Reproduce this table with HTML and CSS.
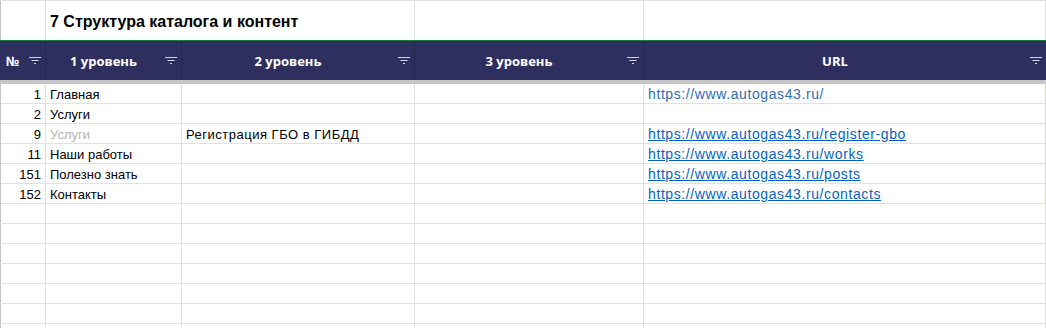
FILE: index.html
```html
<!DOCTYPE html>
<html lang="ru">
<head>
<meta charset="utf-8">
<title>Структура каталога</title>
<link rel="stylesheet" href="styles.css">
</head>
<body>
<div class="sheet">
  <div class="row title-row">
    <div class="cell c0"></div>
    <div class="cell title">7 Структура каталога и контент</div>
    <div class="cell"></div>
    <div class="cell"></div>
  </div>
  <div class="row head-row">
    <div class="hcell"><span class="hlabel">№</span><svg class="filter" width="12" height="7" viewBox="0 0 12 7"><rect x="0" y="0" width="12" height="1"/><rect x="2.5" y="3" width="7" height="1"/><rect x="5" y="6" width="2" height="1"/></svg></div>
    <div class="hcell"><span class="hlabel">1 уровень</span><svg class="filter" width="12" height="7" viewBox="0 0 12 7"><rect x="0" y="0" width="12" height="1"/><rect x="2.5" y="3" width="7" height="1"/><rect x="5" y="6" width="2" height="1"/></svg></div>
    <div class="hcell"><span class="hlabel">2 уровень</span><svg class="filter" width="12" height="7" viewBox="0 0 12 7"><rect x="0" y="0" width="12" height="1"/><rect x="2.5" y="3" width="7" height="1"/><rect x="5" y="6" width="2" height="1"/></svg></div>
    <div class="hcell"><span class="hlabel">3 уровень</span><svg class="filter" width="12" height="7" viewBox="0 0 12 7"><rect x="0" y="0" width="12" height="1"/><rect x="2.5" y="3" width="7" height="1"/><rect x="5" y="6" width="2" height="1"/></svg></div>
    <div class="hcell last"><span class="hlabel">URL</span><svg class="filter" width="12" height="7" viewBox="0 0 12 7"><rect x="0" y="0" width="12" height="1"/><rect x="2.5" y="3" width="7" height="1"/><rect x="5" y="6" width="2" height="1"/></svg></div>
  </div>

  <div class="row data-row">
    <div class="cell c0 num">1</div>
    <div class="cell">Главная</div>
    <div class="cell"></div>
    <div class="cell"></div>
    <div class="cell url sel"><span class="link plain">https://www.autogas43.ru/</span></div>
  </div>
  <div class="row data-row">
    <div class="cell c0 num">2</div>
    <div class="cell">Услуги</div>
    <div class="cell"></div>
    <div class="cell"></div>
    <div class="cell url sel"></div>
  </div>
  <div class="row data-row">
    <div class="cell c0 num">9</div>
    <div class="cell muted">Услуги</div>
    <div class="cell wide">Регистрация ГБО в ГИБДД</div>
    <div class="cell"></div>
    <div class="cell url sel"><span class="link">https://www.autogas43.ru/register-gbo</span></div>
  </div>
  <div class="row data-row">
    <div class="cell c0 num">11</div>
    <div class="cell">Наши работы</div>
    <div class="cell"></div>
    <div class="cell"></div>
    <div class="cell url sel"><span class="link">https://www.autogas43.ru/works</span></div>
  </div>
  <div class="row data-row">
    <div class="cell c0 num">151</div>
    <div class="cell">Полезно знать</div>
    <div class="cell"></div>
    <div class="cell"></div>
    <div class="cell url sel"><span class="link">https://www.autogas43.ru/posts</span></div>
  </div>
  <div class="row data-row">
    <div class="cell c0 num">152</div>
    <div class="cell">Контакты</div>
    <div class="cell"></div>
    <div class="cell"></div>
    <div class="cell url sel"><span class="link">https://www.autogas43.ru/contacts</span></div>
  </div>

  <div class="row data-row"><div class="cell c0"></div><div class="cell"></div><div class="cell"></div><div class="cell"></div><div class="cell"></div></div>
  <div class="row data-row"><div class="cell c0"></div><div class="cell"></div><div class="cell"></div><div class="cell"></div><div class="cell"></div></div>
  <div class="row data-row"><div class="cell c0"></div><div class="cell"></div><div class="cell"></div><div class="cell"></div><div class="cell"></div></div>
  <div class="row data-row"><div class="cell c0"></div><div class="cell"></div><div class="cell"></div><div class="cell"></div><div class="cell"></div></div>
  <div class="row data-row"><div class="cell c0"></div><div class="cell"></div><div class="cell"></div><div class="cell"></div><div class="cell"></div></div>
  <div class="row data-row"><div class="cell c0"></div><div class="cell"></div><div class="cell"></div><div class="cell"></div><div class="cell"></div></div>
  <div class="row data-row"><div class="cell c0"></div><div class="cell"></div><div class="cell"></div><div class="cell"></div><div class="cell"></div></div>
</div>
</body>
</html>
```

FILE: styles.css
```css
html, body {
  margin: 0;
  padding: 0;
  background: #ffffff;
  overflow: hidden;
}

.sheet {
  width: 1046px;
  font-family: "Liberation Sans", Arial, sans-serif;
  font-size: 13px;
  color: #000000;
}

.row {
  display: grid;
  grid-template-columns: 46px 136px 233px 229px 402px;
  box-sizing: border-box;
}

.cell {
  box-sizing: border-box;
  border-right: 1px solid #e1e1e1;
  padding: 0 4px;
  white-space: nowrap;
  overflow: visible;
}

.c0 {
  border-left: 1px solid #c4c4c4;
}

/* title row */
.title-row {
  height: 41px;
  border-top: 1px solid #e1e1e1;
  border-bottom: 1px solid #1e7a3a;
}

.title {
  grid-column: span 2;
  font-size: 16px;
  font-weight: bold;
  color: #000000;
  padding: 10px 4px 0 4px;
  line-height: 22px;
}

/* header row */
.head-row {
  height: 43px;
  background: #2f2f5f;
  border-bottom: 4px solid #c6c6c6;
}

.hcell {
  display: flex;
  align-items: center;
  border-right: 1px solid #27274f;
  padding-right: 4px;
  box-sizing: border-box;
}

.hcell.last {
  border-right: none;
}

.hlabel {
  flex: 1;
  text-align: center;
  color: #ffffff;
  font-family: "Open Sans", "Liberation Sans", sans-serif;
  font-weight: bold;
  font-size: 13px;
  padding-right: 4px;
}

.filter {
  flex: none;
  fill: #d8d8e4;
}

/* data rows */
.data-row {
  height: 20px;
  border-bottom: 1px solid #e1e1e1;
}

.data-row .cell {
  line-height: 19px;
  padding-top: 1px;
}

.num {
  text-align: right;
}

.muted {
  color: #b5b5b5;
}

.wide {
  letter-spacing: 0.5px;
}

.url.sel {
  border-right-color: #c9e2b8;
}

.link {
  font-size: 14px;
  letter-spacing: 0.6px;
  color: #0563c1;
  text-decoration: underline;
}

.link.plain {
  color: #2f6db8;
  text-decoration: none;
}
```
